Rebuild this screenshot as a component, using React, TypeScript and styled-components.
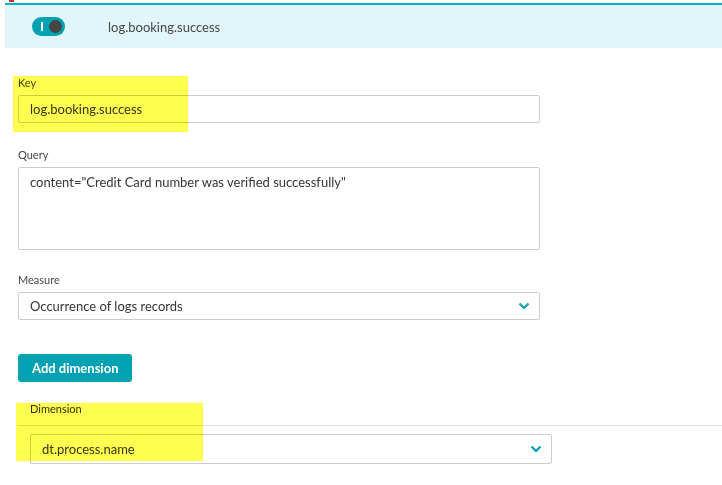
import React from "react";
import styled, { createGlobalStyle } from "styled-components";

const Global = createGlobalStyle`
  html, body { margin: 0; padding: 0; background: #fff; }
  body { font-family: Lato, "Open Sans", Arial, sans-serif; color: #353535; }
  * { box-sizing: border-box; }
`;

const Page = styled.div`
  position: relative;
  width: 722px;
  height: 485px;
  overflow: hidden;
  padding-top: 3px;
`;

const RedMark = styled.div`
  position: absolute;
  left: 9px;
  top: 0;
  width: 5px;
  height: 2px;
  background: #e0262b;
`;

const Header = styled.div`
  margin-left: 5px;
  height: 45px;
  border-top: 2px solid #00b4cb;
  background: #e1f6fa;
  display: flex;
  align-items: center;
  padding-left: 27px;
  gap: 43px;
`;

const Toggle = styled.div`
  position: relative;
  width: 33px;
  height: 19px;
  border-radius: 10px;
  background: #00a1b2;
  display: flex;
  align-items: center;
  justify-content: space-between;
  padding: 0 3px 0 9px;
`;

const ToggleBar = styled.span`
  width: 2px;
  height: 9px;
  background: #fff;
`;

const ToggleKnob = styled.span`
  width: 13px;
  height: 13px;
  border-radius: 50%;
  background: #454646;
`;

const HeaderTitle = styled.span`
  font-size: 13px;
  color: #454646;
`;

const Form = styled.div`
  display: flex;
  flex-direction: column;
  padding: 28px 0 0 18px;
`;

const Field = styled.div<{ $gap?: number }>`
  display: flex;
  flex-direction: column;
  margin-bottom: ${(p) => p.$gap ?? 24}px;
`;

const Label = styled.label<{ $strong?: boolean }>`
  font-size: 11px;
  line-height: 14px;
  color: ${(p) => (p.$strong ? "#2f2f2f" : "#454646")};
  margin-bottom: 5px;
`;

const Box = styled.div<{ $h?: number; $w?: number }>`
  position: relative;
  width: ${(p) => p.$w ?? 522}px;
  height: ${(p) => p.$h ?? 28}px;
  border: 1px solid #cccccc;
  border-radius: 2px;
  background: #fff;
  font-size: 13px;
  color: #353535;
  padding: 0 11px;
  display: flex;
  align-items: center;
`;

const TextArea = styled(Box)`
  align-items: flex-start;
  padding-top: 6px;
`;

const Chevron = styled.svg`
  position: absolute;
  right: 9px;
  top: 50%;
  transform: translateY(-50%);
`;

const Button = styled.button`
  align-self: flex-start;
  height: 28px;
  padding: 0 14px;
  border: none;
  border-radius: 3px;
  background: #00a1b2;
  color: #fff;
  font-family: inherit;
  font-size: 13px;
  font-weight: 700;
  margin-bottom: 15px;
`;

const Section = styled.div`
  display: flex;
  flex-direction: column;
`;

const SectionHead = styled.div`
  padding: 0 0 9px 12px;
  border-bottom: 1px solid #dcdcdc;
  margin-bottom: 8px;
`;

const SectionLabel = styled(Label)`
  margin: 0;
`;

const SectionBody = styled.div`
  padding-left: 12px;
`;

const Highlight = styled.div<{ $x: number; $y: number; $w: number; $h: number }>`
  position: absolute;
  left: ${(p) => p.$x}px;
  top: ${(p) => p.$y}px;
  width: ${(p) => p.$w}px;
  height: ${(p) => p.$h}px;
  background: #ffff4f;
  mix-blend-mode: multiply;
  pointer-events: none;
`;

const ChevronIcon = () => (
  <Chevron width="12" height="8" viewBox="0 0 12 8">
    <path d="M1.5 1.5 L6 6 L10.5 1.5" fill="none" stroke="#00a1b2" strokeWidth="2.2" />
  </Chevron>
);

export default function App() {
  return (
    <Page>
      <Global />
      <RedMark />
      <Header>
        <Toggle>
          <ToggleBar />
          <ToggleKnob />
        </Toggle>
        <HeaderTitle>log.booking.success</HeaderTitle>
      </Header>
      <Form>
        <Field $gap={25}>
          <Label>Key</Label>
          <Box>log.booking.success</Box>
        </Field>
        <Field $gap={23}>
          <Label>Query</Label>
          <TextArea $h={83}>content="Credit Card number was verified successfully"</TextArea>
        </Field>
        <Field $gap={34}>
          <Label>Measure</Label>
          <Box>
            Occurrence of logs records
            <ChevronIcon />
          </Box>
        </Field>
        <Button>Add dimension</Button>
        <Section>
          <SectionHead>
            <SectionLabel $strong>Dimension</SectionLabel>
          </SectionHead>
          <SectionBody>
            <Box $h={30}>
              dt.process.name
              <ChevronIcon />
            </Box>
          </SectionBody>
        </Section>
      </Form>
      <Highlight $x={13} $y={76} $w={175} $h={56} />
      <Highlight $x={16} $y={403} $w={187} $h={58} />
    </Page>
  );
}
